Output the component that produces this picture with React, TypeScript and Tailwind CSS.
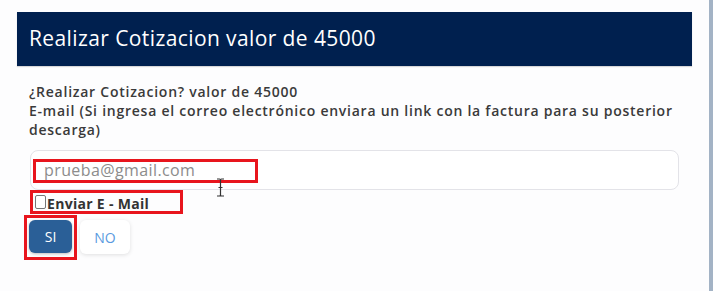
const font = { fontFamily: "'Open Sans', 'Noto Sans', sans-serif" };

function RedMark({ className }: { className: string }) {
  return <div className={`pointer-events-none absolute border-[3px] border-[#e8151d] ${className}`} />;
}

function TextCursor() {
  return (
    <svg className="absolute left-[185px] top-[27px]" width="9" height="19" viewBox="0 0 9 19" fill="none">
      <path d="M1 1h2.5c.6 0 1 .4 1 1v15c0 .6.4 1 1 1H8M8 1H5.5c-.6 0-1 .4-1 1M4.5 17c0 .6-.4 1-1 1H1M2.5 9.5h4" stroke="#333" strokeWidth="1.2" />
    </svg>
  );
}

export default function App() {
  return (
    <div className="relative h-[291px] w-[713px] overflow-hidden bg-[#fdfdfe]" style={font}>
      <div className="h-full border-r-4 border-[#a3b3c5] pl-[17px] pr-[17px] pt-[12px]">
        <div className="flex h-[54px] items-center bg-[#00204f] px-3 shadow-[0_1px_1px_rgba(0,0,0,0.15)]">
          <h2 className="text-[21px] tracking-[0.4px] text-white">Realizar Cotizacion valor de 45000</h2>
        </div>

        <div className="px-3 pt-[16px] text-[14px] font-semibold leading-[19px] tracking-[0.75px] text-[#3a3a3a]">
          <p>¿Realizar Cotizacion? valor de 45000</p>
          <p className="whitespace-nowrap">
            E-mail (Si ingresa el correo electrónico enviara un link con la factura para su posterior
            <br />
            descarga)
          </p>
        </div>

        <div className="px-[13px] pt-[11px]">
          <div className="relative flex h-[40px] items-center rounded-lg border border-[#e3e3e8] bg-white px-[13px]">
            <input
              className="w-full bg-transparent text-[16px] tracking-[0.4px] text-[#555] outline-none placeholder:text-[#8c8c8c]"
              placeholder="prueba@gmail.com"
              style={font}
            />
            <RedMark className="left-[2px] top-[8px] h-[24px] w-[225px]" />
            <TextCursor />
          </div>

          <div className="relative flex h-[24px] items-center">
            <span className="ml-[5px] h-[14px] w-[11px] rounded-[2px] border border-[#767676] bg-white" />
            <span className="ml-[1px] mt-[3px] text-[14px] font-bold tracking-[0.3px] text-[#333]">Enviar E - Mail</span>
            <RedMark className="left-0 top-0 h-[24px] w-[153px]" />
          </div>

          <div className="relative mt-[6px] flex gap-2">
            <button className="-ml-px h-[33px] w-[43px] rounded-md bg-[#2a5f97] text-[14px] text-white shadow-[0_1px_3px_rgba(0,0,0,0.25)]">
              SI
            </button>
            <button className="h-[34px] w-[50px] rounded-md bg-white text-[14px] text-[#5a9ae0] shadow-[0_1px_4px_rgba(0,0,0,0.12)]">
              NO
            </button>
            <RedMark className="-left-[6px] -top-[5px] h-[45px] w-[53px]" />
          </div>
        </div>
      </div>
    </div>
  );
}
